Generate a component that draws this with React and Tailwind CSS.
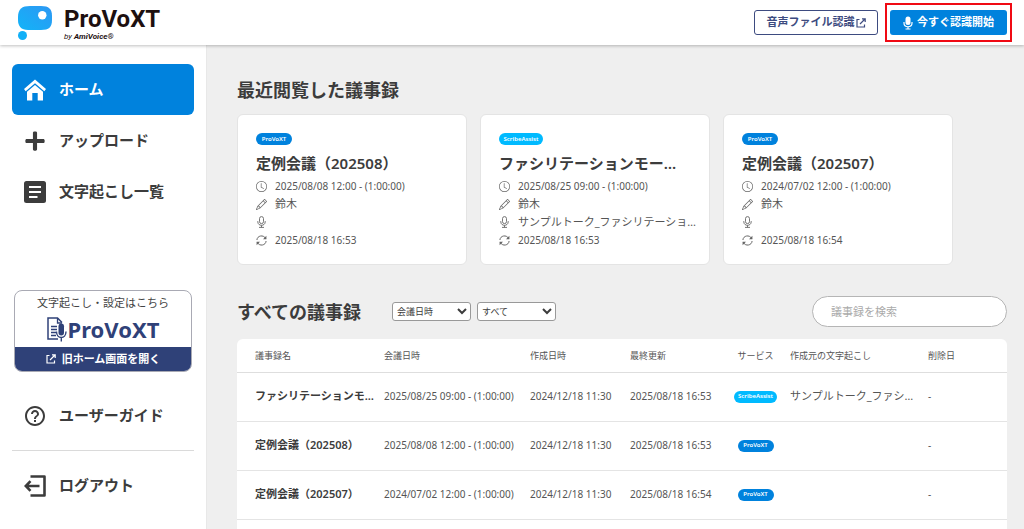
import { BsClock, BsPencil } from 'react-icons/bs'
import { FaPlus } from 'react-icons/fa'
import { MdHelpOutline } from 'react-icons/md'

const CARDS = [
  { service: 'ProVoXT', title: '定例会議（202508）', date: '2025/08/08 12:00 - (1:00:00)', author: '鈴木', source: '', updated: '2025/08/18 16:53' },
  { service: 'ScribeAssist', title: 'ファシリテーションモー…', date: '2025/08/25 09:00 - (1:00:00)', author: '鈴木', source: 'サンプルトーク_ファシリテーショ…', updated: '2025/08/18 16:53' },
  { service: 'ProVoXT', title: '定例会議（202507）', date: '2024/07/02 12:00 - (1:00:00)', author: '鈴木', source: '', updated: '2025/08/18 16:54' },
]

const ROWS = [
  { name: 'ファシリテーションモ…', date: '2025/08/25 09:00 - (1:00:00)', created: '2024/12/18 11:30', updated: '2025/08/18 16:53', service: 'ScribeAssist', source: 'サンプルトーク_ファシ…' },
  { name: '定例会議（202508）', date: '2025/08/08 12:00 - (1:00:00)', created: '2024/12/18 11:30', updated: '2025/08/18 16:53', service: 'ProVoXT', source: '' },
  { name: '定例会議（202507）', date: '2024/07/02 12:00 - (1:00:00)', created: '2024/12/18 11:30', updated: '2025/08/18 16:54', service: 'ProVoXT', source: '' },
]

function LogoMark() {
  return (
    <svg width="36" height="36" viewBox="0 0 36 36" aria-hidden="true">
      <defs>
        <linearGradient id="mark" x1="0" y1="1" x2="1" y2="0">
          <stop offset="0" stopColor="#12b4f8" />
          <stop offset="1" stopColor="#2d97f3" />
        </linearGradient>
      </defs>
      <path d="M12 1H23C31 1 34 4 34 11V15C34 22 31 25 23 25H10C3 25 0 21 0 15V12C0 4 4 1 12 1Z" fill="url(#mark)" />
      <circle cx="24.300" cy="10.300" r="4.200" fill="#fff" />
      <circle cx="4.500" cy="30.500" r="4.500" fill="#12b0f7" />
    </svg>
  )
}

function HomeIcon() {
  return (
    <svg width="22" height="22" viewBox="0 0 22 22" fill="currentColor" aria-hidden="true">
      <path d="M11 0.500L22 10L20.300 12.200L11 4.300L1.700 12.200L0 10Z" />
      <path d="M11 6L19 12.800V21.500H13.700V14H8.300V21.500H3V12.800Z" />
    </svg>
  )
}

function ListIcon() {
  return (
    <svg width="22" height="22" viewBox="0 0 22 22" aria-hidden="true">
      <rect width="22" height="22" rx="2.500" fill="currentColor" />
      <path d="M5 6H17M5 11H17M5 16H13.500" stroke="#fff" strokeWidth="2.200" />
    </svg>
  )
}

function LogoutIcon() {
  return (
    <svg width="22" height="22" viewBox="0 0 22 22" fill="none" stroke="currentColor" strokeWidth="2.600" aria-hidden="true">
      <path d="M6.500 1.500H20.500V20.500H6.500" strokeLinejoin="round" />
      <path d="M2 11H15.500M6.500 6.200L1.800 11L6.500 15.800" />
    </svg>
  )
}

function ExternalIcon() {
  return (
    <svg width="10" height="10" viewBox="0 0 10 10" fill="none" stroke="currentColor" strokeWidth="1.200" aria-hidden="true">
      <path d="M3.500 1.500H1V9H8.500V6.500" />
      <path d="M6 0.800H9.200V4M9 1L4 6" />
    </svg>
  )
}

function MicIcon() {
  return (
    <svg width="10" height="14" viewBox="0 0 10 14" aria-hidden="true">
      <rect x="2.500" y="0.500" width="5" height="8.500" rx="2.500" fill="currentColor" />
      <path d="M1 6V7C1 12 9 12 9 7V6M5 10.500V13M2.500 13H7.500" fill="none" stroke="currentColor" strokeWidth="1.200" />
    </svg>
  )
}

function MicOutlineIcon() {
  return (
    <svg width="11" height="12" viewBox="0 0 11 12" fill="none" stroke="currentColor" strokeWidth="0.900" aria-hidden="true">
      <rect x="3.500" y="0.600" width="4" height="7" rx="2" />
      <path d="M1.800 5V5.800C1.800 10.500 9.200 10.500 9.200 5.800V5M5.500 9.300V11.300M3 11.400H8" />
    </svg>
  )
}

function RefreshIcon() {
  return (
    <svg width="11" height="11" viewBox="0 0 11 11" fill="none" stroke="currentColor" aria-hidden="true">
      <path d="M0.900 5C1.200 0.500 7.500 -0.600 9.600 3.400M10.100 6C9.800 10.500 3.500 11.600 1.400 7.600" />
      <path d="M10.400 0.800V4.200H7ZM0.600 10.200V6.800H4Z" fill="currentColor" stroke="none" />
    </svg>
  )
}

function DocMicIcon() {
  return (
    <svg width="21" height="25" viewBox="0 0 21 25" fill="none" stroke="#2f4178" aria-hidden="true">
      <path d="M11 22H1V1H10.500L15 5.500" strokeWidth="1.500" />
      <path d="M10.500 1V6H15M4 9.500H10M4 12.500H10M4 15.500H9M4 18.500H9" strokeWidth="1.300" />
      <rect x="11.500" y="6.500" width="5.500" height="12" rx="2.750" fill="#2f4178" stroke="none" />
      <path d="M9.500 14.500C9.500 22.500 19 22.500 19 14.500M14.300 20.500V24.500" strokeWidth="1.400" />
    </svg>
  )
}

function Badge({ service }) {
  const color = service === 'ScribeAssist' ? 'bg-[#00baff] w-11' : 'bg-[#0082dd] w-9'
  return (
    <span className={`flex h-3 items-center justify-center rounded-full text-[6px] font-semibold text-white ${color}`}>
      {service}
    </span>
  )
}

function NavItem({ icon, label, active }) {
  return (
    <a
      href="#"
      className={`flex h-[51px] items-center gap-[13px] rounded-md px-3 text-[15px] font-bold ${active ? 'bg-[#0082dd] text-white' : 'text-[#3c3c3c]'}`}
    >
      {icon}
      {label}
    </a>
  )
}

function CardLine({ icon, children, small }) {
  return (
    <li className="flex h-[18px] items-center gap-2">
      <span className="flex w-[11px] shrink-0 justify-center text-[#666]">{icon}</span>
      <span className={`whitespace-nowrap ${small ? 'text-[10px]' : 'text-[11px]'}`}>{children}</span>
    </li>
  )
}

function Card({ card }) {
  return (
    <article className="w-[230px] rounded-md border border-[#e4e4e4] bg-white pt-[18px] pr-3 pb-[15px] pl-[18px] text-[#555]">
      <Badge service={card.service} />
      <h3 className="mt-1.5 mb-0.5 text-[15px] leading-6 font-semibold whitespace-nowrap text-[#3c3c3c]">{card.title}</h3>
      <ul>
        <CardLine icon={<BsClock size={11} />} small>{card.date}</CardLine>
        <CardLine icon={<BsPencil size={11} />}>{card.author}</CardLine>
        <CardLine icon={<MicOutlineIcon />}>{card.source}</CardLine>
        <CardLine icon={<RefreshIcon />} small>{card.updated}</CardLine>
      </ul>
    </article>
  )
}

function Header() {
  return (
    <header className="z-10 flex h-[45px] shrink-0 items-center justify-between bg-white pr-3 pl-[18px] shadow-[0_1px_3px_rgba(0,0,0,0.25)]">
      <a href="#" className="flex items-center gap-[10px] font-[Roboto,sans-serif] text-[#1d1010]">
        <LogoMark />
        <span className="flex flex-col">
          <span className="text-[24px] leading-7 font-bold">ProVoXT</span>
          <span className="text-[8px] leading-2 italic">by <b>AmiVoice®</b></span>
        </span>
      </a>
      <div className="flex items-center gap-[7px]">
        <button type="button" className="flex h-[25px] w-[124px] items-center justify-center gap-px rounded-[3px] border border-[#3d4b80] bg-white text-[11px] font-bold text-[#3d4b80]">
          音声ファイル認識
          <ExternalIcon />
        </button>
        <div className="border-2 border-[#f00a14] px-[3px] py-[5px]">
          <button type="button" className="flex h-[25px] w-[117px] items-center justify-center gap-1 rounded-[3px] bg-[#0082dd] text-[11px] font-bold text-white">
            <MicIcon />
            今すぐ認識開始
          </button>
        </div>
      </div>
    </header>
  )
}

function Sidebar() {
  return (
    <aside className="w-[207px] shrink-0 border-r border-[#e8e8e8] bg-white pt-[19px] pr-3 pl-3">
      <nav>
        <NavItem icon={<HomeIcon />} label="ホーム" active />
        <NavItem icon={<FaPlus size={22} />} label="アップロード" />
        <NavItem icon={<ListIcon />} label="文字起こし一覧" />
        <a href="#" className="mx-0.5 mt-[73px] mb-[18px] block overflow-hidden rounded-lg border border-[#a9aab4] text-center">
          <span className="block pt-1 text-[11px] leading-4 text-[#444]">文字起こし・設定はこちら</span>
          <span className="flex h-9 items-center justify-center text-[22px] leading-6 font-bold text-[#2f4178]">
            <DocMicIcon />
            ProVoXT
          </span>
          <span className="flex h-6 items-center justify-center gap-1.5 bg-[#2f4178] text-[11px] font-bold text-white">
            <ExternalIcon />
            旧ホーム画面を開く
          </span>
        </a>
        <NavItem icon={<MdHelpOutline size={24} className="-mx-px" />} label="ユーザーガイド" />
        <hr className="my-[9px] border-[#dadada]" />
        <NavItem icon={<LogoutIcon />} label="ログアウト" />
      </nav>
    </aside>
  )
}

function MinutesTable() {
  return (
    <table className="w-full table-fixed text-left whitespace-nowrap">
      <thead>
        <tr className="h-[33px] border-b border-[#dedede] text-[9px] text-[#555]">
          <th className="w-[147px] pl-[18px] font-normal">議事録名</th>
          <th className="w-[146px] font-normal">会議日時</th>
          <th className="w-[100px] font-normal">作成日時</th>
          <th className="w-[104px] font-normal">最終更新</th>
          <th className="w-[56px] pr-[13px] text-center font-normal">サービス</th>
          <th className="w-[138px] font-normal">作成元の文字起こし</th>
          <th className="font-normal">削除日</th>
        </tr>
      </thead>
      <tbody>
        {ROWS.map((row) => (
          <tr key={row.name} className="h-[49px] border-b border-[#e4e4e4] text-[10px] text-[#555]">
            <td className="pl-[18px] text-[11px] font-semibold text-[#3c3c3c]">{row.name}</td>
            <td>{row.date}</td>
            <td>{row.created}</td>
            <td>{row.updated}</td>
            <td className="pr-[13px]">
              <div className="flex justify-center"><Badge service={row.service} /></div>
            </td>
            <td className="text-[11px]">{row.source}</td>
            <td>-</td>
          </tr>
        ))}
      </tbody>
    </table>
  )
}

export default function App() {
  return (
    <div className="flex h-screen flex-col overflow-hidden bg-[#efefef] font-['Noto_Sans','Noto_Sans_CJK_JP',sans-serif]">
      <Header />
      <div className="flex min-h-0 flex-1">
        <Sidebar />
        <main className="flex min-w-0 flex-1 flex-col pt-[33px] pr-[17px] pl-[30px] text-[#3c3c3c]">
          <h2 className="text-[18px] leading-6 font-bold">最近閲覧した議事録</h2>
          <div className="mt-3 flex gap-[13px]">
            {CARDS.map((card) => <Card key={card.title} card={card} />)}
          </div>
          <div className="mt-[31px] mb-3 flex items-center">
            <h2 className="mr-[31px] text-[18px] leading-6 font-bold">すべての議事録</h2>
            <select aria-label="並び順" className="mr-1.5 h-[19px] w-[79px] rounded-[3px] border border-[#999] bg-white text-[9px]">
              <option>会議日時</option>
            </select>
            <select aria-label="サービス" className="h-[19px] w-[79px] rounded-[3px] border border-[#999] bg-white text-[9px]">
              <option>すべて</option>
            </select>
            <input
              type="search"
              aria-label="議事録を検索"
              placeholder="議事録を検索"
              className="ml-auto h-[31px] w-[195px] rounded-full border border-[#b5b5b5] bg-white px-[18px] text-[11px] placeholder:text-[#aaa]"
            />
          </div>
          <section className="min-h-0 flex-1 overflow-hidden rounded-t-md bg-white">
            <MinutesTable />
          </section>
        </main>
      </div>
    </div>
  )
}
